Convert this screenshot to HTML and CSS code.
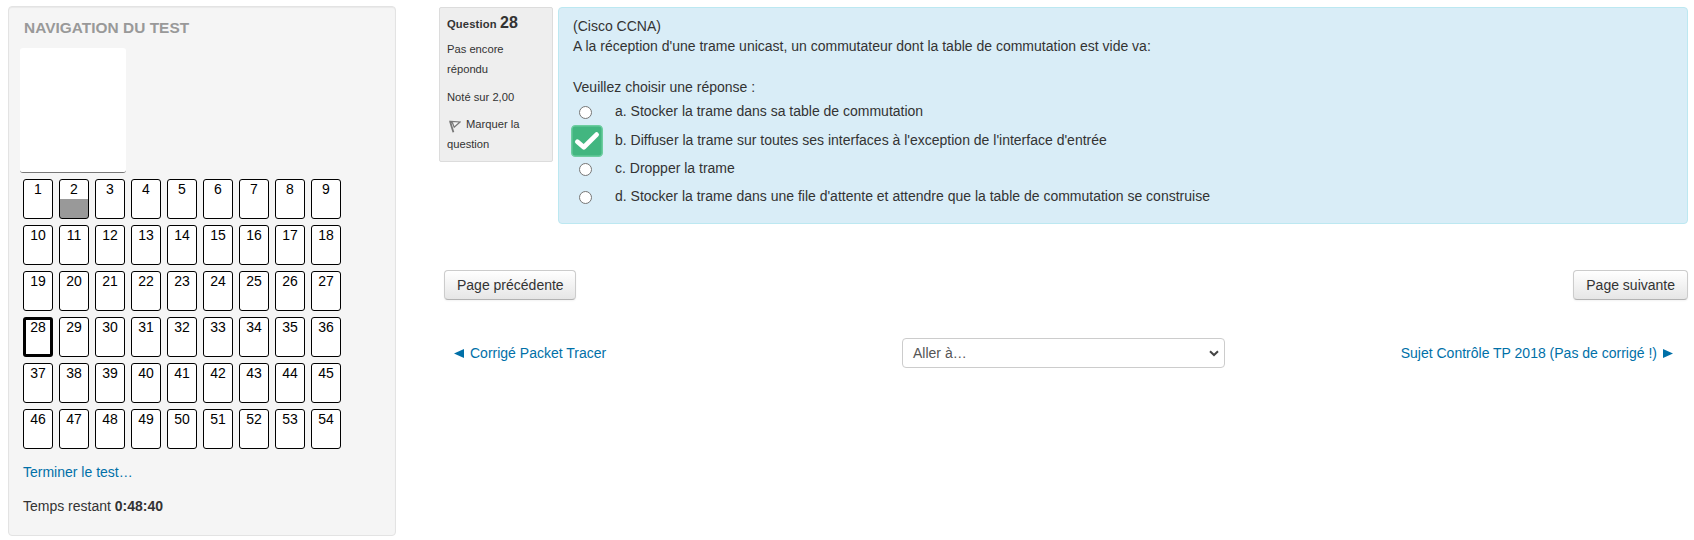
FILE: index.html
```html
<!DOCTYPE html>
<html lang="fr">
<head>
<meta charset="utf-8">
<title>Test</title>
<link rel="stylesheet" href="styles.css">
</head>
<body>
<div class="page">
  <aside class="nav-block">
    <h2 class="nav-title">NAVIGATION DU TEST</h2>
    <div class="user-picture"></div>
    <div class="qn-grid">
      <a class="qn">1</a><a class="qn answered">2</a><a class="qn">3</a><a class="qn">4</a><a class="qn">5</a><a class="qn">6</a><a class="qn">7</a><a class="qn">8</a><a class="qn">9</a>
      <a class="qn">10</a><a class="qn">11</a><a class="qn">12</a><a class="qn">13</a><a class="qn">14</a><a class="qn">15</a><a class="qn">16</a><a class="qn">17</a><a class="qn">18</a>
      <a class="qn">19</a><a class="qn">20</a><a class="qn">21</a><a class="qn">22</a><a class="qn">23</a><a class="qn">24</a><a class="qn">25</a><a class="qn">26</a><a class="qn">27</a>
      <a class="qn current">28</a><a class="qn">29</a><a class="qn">30</a><a class="qn">31</a><a class="qn">32</a><a class="qn">33</a><a class="qn">34</a><a class="qn">35</a><a class="qn">36</a>
      <a class="qn">37</a><a class="qn">38</a><a class="qn">39</a><a class="qn">40</a><a class="qn">41</a><a class="qn">42</a><a class="qn">43</a><a class="qn">44</a><a class="qn">45</a>
      <a class="qn">46</a><a class="qn">47</a><a class="qn">48</a><a class="qn">49</a><a class="qn">50</a><a class="qn">51</a><a class="qn">52</a><a class="qn">53</a><a class="qn">54</a>
    </div>
    <a class="link finish">Terminer le test…</a>
    <div class="timer">Temps restant <b>0:48:40</b></div>
  </aside>

  <main class="main">
    <div class="question">
      <div class="info">
        <h3 class="info-no">Question <span class="qno">28</span></h3>
        <div class="state">Pas encore<br>répondu</div>
        <div class="grade">Noté sur 2,00</div>
        <div class="flag"><svg class="flag-icon" width="12" height="13" viewBox="0 0 12 13"><path d="M1 1.2 L4.4 12.3" stroke="#777" stroke-width="1.8" fill="none"/><path d="M1.5 1.4 L11 2 L5.2 7.2 L3.6 3.2 Z" stroke="#777" stroke-width="1.2" fill="#f4f4f4"/></svg>Marquer la<br>question</div>
      </div>
      <div class="formulation">
        <div class="qtext">(Cisco CCNA)<br>A la réception d'une trame unicast, un commutateur dont la table de commutation est vide va:</div>
        <div class="prompt">Veuillez choisir une réponse :</div>
        <div class="answers">
          <label class="answer"><span class="mark"><span class="radio"></span></span><span>a. Stocker la trame dans sa table de commutation</span></label>
          <label class="answer chosen"><span class="mark"><svg class="check" width="32" height="32" viewBox="0 0 32 32"><rect x="0.75" y="0.75" width="30.5" height="30.5" rx="3.5" fill="#42b680" stroke="#6dcda0" stroke-width="1.5"/><path d="M6.4 16.8 L12.8 22.3 L25.6 9.6" fill="none" stroke="#fff" stroke-width="4.8" stroke-linecap="round" stroke-linejoin="round"/></svg></span><span>b. Diffuser la trame sur toutes ses interfaces à l'exception de l'interface d'entrée</span></label>
          <label class="answer"><span class="mark"><span class="radio"></span></span><span>c. Dropper la trame</span></label>
          <label class="answer"><span class="mark"><span class="radio"></span></span><span>d. Stocker la trame dans une file d'attente et attendre que la table de commutation se construise</span></label>
        </div>
      </div>
    </div>
    <div class="buttons">
      <button class="btn btn-prev">Page précédente</button>
      <button class="btn">Page suivante</button>
    </div>
    <div class="activity-nav">
      <a class="link prev"><svg class="arrow" width="10" height="9" viewBox="0 0 10 9"><path d="M10 0 V9 L0 4.5Z" fill="#0070a8"/></svg>Corrigé Packet Tracer</a>
      <div class="jump"><span>Aller à…</span><svg width="10" height="7" viewBox="0 0 10 7"><path d="M1 1.2 L5 5 L9 1.2" fill="none" stroke="#444" stroke-width="2"/></svg></div>
      <a class="link next">Sujet Contrôle TP 2018 (Pas de corrigé !)<svg class="arrow" width="10" height="9" viewBox="0 0 10 9"><path d="M0 0 V9 L10 4.5Z" fill="#0070a8"/></svg></a>
    </div>
  </main>
</div>
</body>
</html>
```
FILE: styles.css
```css
* { box-sizing: border-box; }
body { margin: 0; background: #fff; color: #333; font: 14px/20px "Liberation Sans", Arial, sans-serif; }
.page { display: flex; gap: 43px; padding: 6px 6px 4px 8px; height: 540px; }
.nav-block { width: 388px; height: 530px; padding: 11px 11px 10px; background: #f5f5f5; border: 1px solid #e3e3e3; border-radius: 4px; box-shadow: inset 0 1px 1px rgba(0,0,0,.05); }
.nav-title { margin: 0 0 10px 4px; font-size: 15.4px; line-height: 20px; font-weight: bold; color: #999; letter-spacing: .04px; }
.user-picture { width: 106px; height: 125px; background: #fff; border-radius: 3px; border-bottom: 1px solid #777; }
.qn-grid { display: grid; grid-template-columns: repeat(9, 30px); grid-auto-rows: 40px; gap: 6px; margin: 6px 0 0 3px; }
.qn { border: 1px solid #000; border-radius: 3px; background: #fff; color: #000; text-align: center; line-height: 19px; }
.answered { background: linear-gradient(#fff 19px, #999 19px); }
.current { border-width: 3px; line-height: 15px; }
.link { color: #0070a8; }
.finish { display: block; margin: 13px 0 0 3px; }
.timer { margin: 14px 0 0 3px; }
.main { flex: 1; padding-top: 1px; }
.question { display: flex; align-items: flex-start; gap: 5px; height: 217px; }
.info { width: 114px; height: 155px; padding: 5px 7px; background: #eee; border: 1px solid #dcdcdc; border-radius: 2px; font-size: 11.2px; line-height: 20px; }
.info-no { margin: 0; font-size: 11.2px; line-height: 20px; letter-spacing: .15px; }
.qno { font-size: 16px; }
.state { margin-top: 5px; }
.grade { margin-top: 8px; }
.flag { margin-top: 7px; }
.flag-icon { margin: 0 5px 0 2px; vertical-align: -5px; }
.formulation { flex: 1; height: 217px; padding: 8px 14px; background: #d9edf7; border: 1px solid #bce8f1; border-radius: 4px; }
.prompt { margin-top: 21px; }
.answers { margin-top: 0; }
.answer { display: flex; align-items: center; height: 28px; }
.chosen { height: 29px; }
.mark { width: 42px; display: flex; padding-left: 6px; }
.radio { width: 13px; height: 13px; border: 1px solid #767676; border-radius: 50%; background: #fff; margin-top: 3px; }
.check { flex: none; margin: 2px 0 0 -8px; }
.buttons { display: flex; justify-content: space-between; padding-left: 5px; margin-top: 46px; }
.btn { height: 30px; padding: 0 12px; border: 1px solid #ccc; border-bottom-color: #b3b3b3; border-radius: 4px; background: linear-gradient(#fff, #e6e6e6); color: #333; font: inherit; box-shadow: 0 1px 2px rgba(0,0,0,.05); }
.btn-prev { padding-right: 11px; }
.activity-nav { display: grid; grid-template-columns: 463px 323px 1fr; align-items: center; margin-top: 38px; height: 30px; }
.prev { padding-left: 15px; }
.next { padding-right: 15px; text-align: right; }
.prev .arrow { margin-right: 6px; }
.next .arrow { margin-left: 6px; }
.jump { display: flex; justify-content: space-between; align-items: center; height: 30px; padding: 0 5px 0 10px; border: 1px solid #ccc; border-radius: 4px; color: #555; }
```
